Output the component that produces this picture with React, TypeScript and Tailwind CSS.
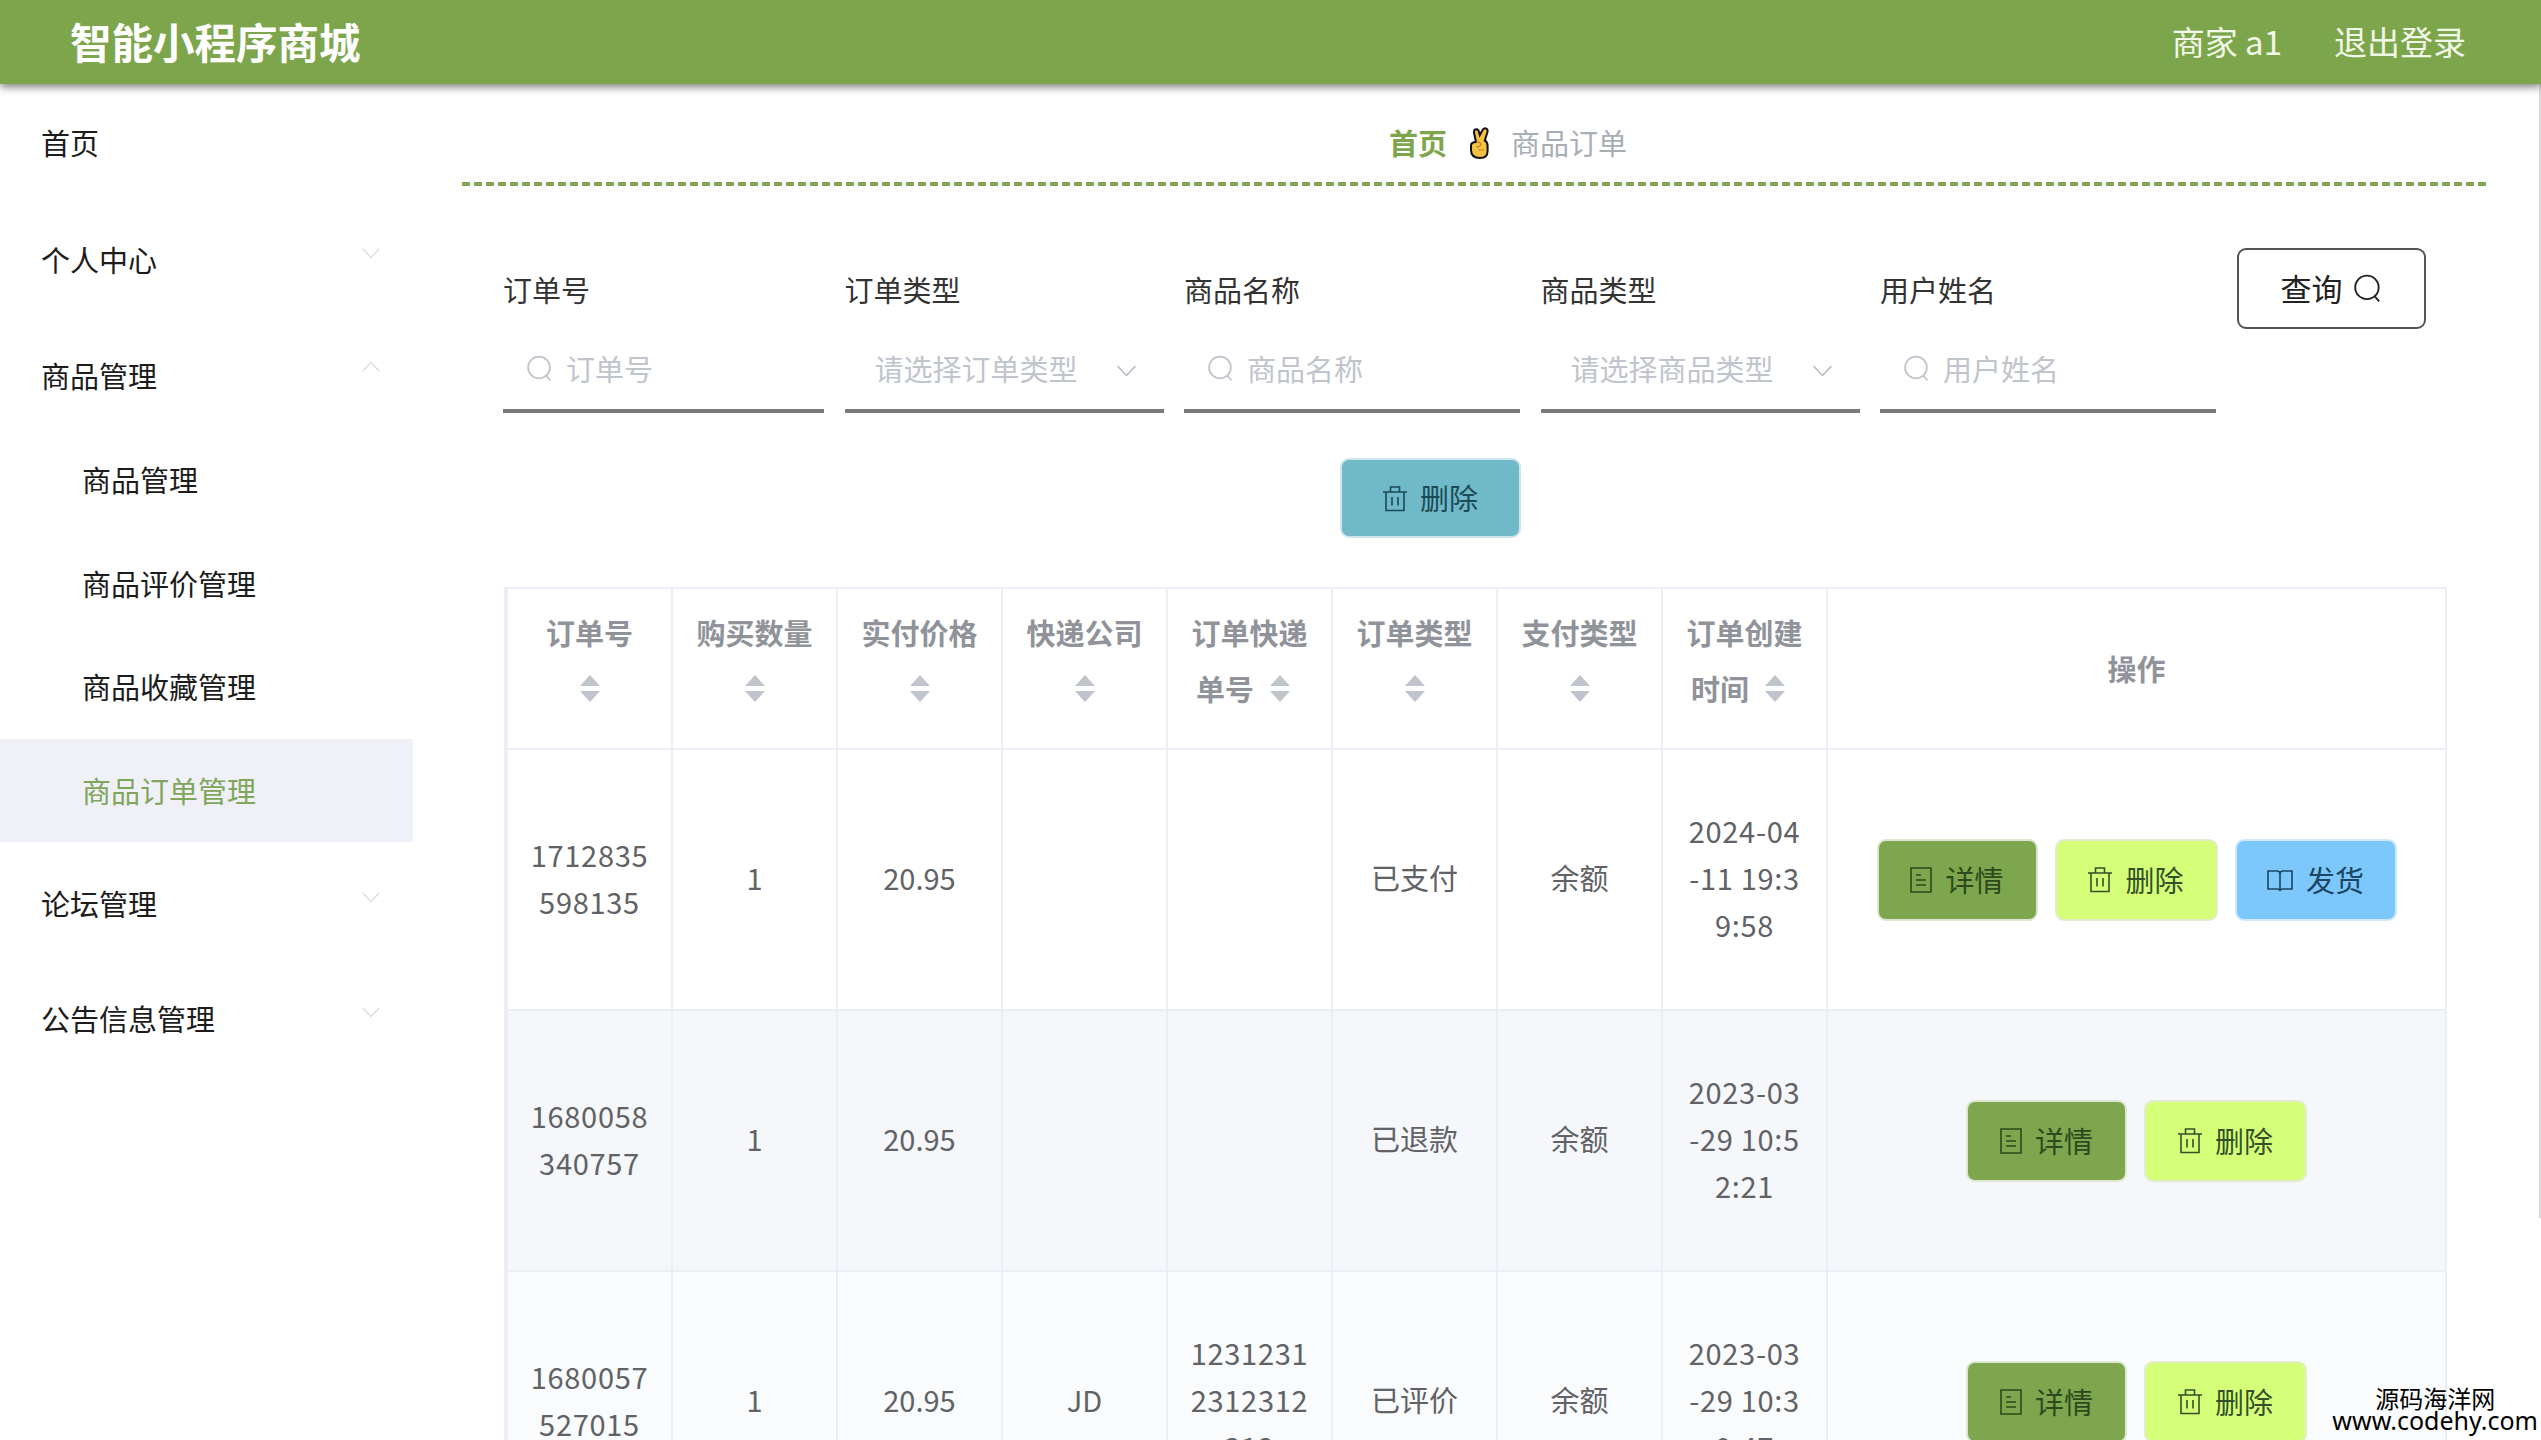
import type { ReactNode } from "react";

type Action = "detail" | "remove" | "ship";

type Order = {
  id: string[];
  company: string;
  tracking: string[];
  orderType: string;
  created: string[];
  actions: Action[];
  rowClass: string;
};

const ORDERS: Order[] = [
  { id: ["1712835", "598135"], company: "", tracking: [], orderType: "已支付", created: ["2024-04", "-11 19:3", "9:58"], actions: ["detail", "remove", "ship"], rowClass: "bg-white" },
  { id: ["1680058", "340757"], company: "", tracking: [], orderType: "已退款", created: ["2023-03", "-29 10:5", "2:21"], actions: ["detail", "remove"], rowClass: "bg-[#f5f7fa]" },
  { id: ["1680057", "527015"], company: "JD", tracking: ["1231231", "2312312", "312"], orderType: "已评价", created: ["2023-03", "-29 10:3", "0:47"], actions: ["detail", "remove"], rowClass: "bg-[#fafbfd]" },
];

const HEADERS: string[][] = [
  ["订单号"],
  ["购买数量"],
  ["实付价格"],
  ["快递公司"],
  ["订单快递", "单号"],
  ["订单类型"],
  ["支付类型"],
  ["订单创建", "时间"],
];

const cellBorder = "border-r-2 border-b-2 border-[#ebeef5]";

function Chevron({ up = false, className }: { up?: boolean; className: string }) {
  return (
    <svg viewBox="0 0 20 12" fill="none" stroke="currentColor" strokeWidth="1.4" className={className}>
      <path d={up ? "M1 11 L10 1.5 L19 11" : "M1 1 L10 10.5 L19 1"} />
    </svg>
  );
}

function SearchIcon({ className }: { className: string }) {
  return (
    <svg viewBox="0 0 26 26" fill="none" stroke="currentColor" strokeWidth="1.7" className={className}>
      <circle cx="12.5" cy="12" r="10.5" />
      <path d="M19.5 20 L23.5 24.5" />
    </svg>
  );
}

function TrashIcon() {
  return (
    <svg viewBox="0 0 24 26" fill="none" stroke="currentColor" strokeWidth="1.6" className="h-[27px] w-[24px]">
      <path d="M0 6.5 H24 M3 6.5 V25 H21 V6.5 M7.5 6.5 V1.5 H16.5 V6.5 M9 11.5 V20 M15 11.5 V20" />
    </svg>
  );
}

function TicketIcon() {
  return (
    <svg viewBox="0 0 22 26" fill="none" stroke="currentColor" strokeWidth="1.6" className="h-[26px] w-[22px]">
      <path d="M1 1 H21 V25 H1 Z M6 8 H11 M6 13 H16 M6 18 H16" />
    </svg>
  );
}

function BookIcon() {
  return (
    <svg viewBox="0 0 26 24" fill="none" stroke="currentColor" strokeWidth="1.6" className="h-6 w-[26px]">
      <path d="M1 3 H10 Q13 3 13 6 Q13 3 16 3 H25 V21 H16 Q13 21 13 23 Q13 21 10 21 H1 Z M13 6 V23" />
    </svg>
  );
}

function Hand() {
  return (
    <svg viewBox="0 0 20 32" className="h-8 w-5">
      <path
        d="M7 15 L5 5.5 Q4.8 2.5 7.3 2.3 Q9.5 2.2 10 5 L10.8 8 L13.8 2.6 Q15.4 0.6 17.4 1.6 Q19.2 2.8 18.4 5.2 L15.8 13.5 Q18.6 15 18.6 19 L18.6 24 Q18.6 31 11 31 Q2 31 2 23 L2 18.5 Q2 15 7 15 Z"
        fill="#f4c143"
        stroke="#111"
        strokeWidth="2"
      />
      <path d="M7 15 Q11 14.5 12 17.5 Q11 20 7 20 M9 23 H15" fill="none" stroke="#b98a20" strokeWidth="1.2" />
    </svg>
  );
}

function SortCaret() {
  return (
    <span className="inline-flex flex-col items-center gap-[5px]">
      <span className="h-0 w-0 border-x-[10px] border-b-[11px] border-x-transparent border-b-[#c0c4cc]" />
      <span className="h-0 w-0 border-x-[10px] border-t-[11px] border-x-transparent border-t-[#c0c4cc]" />
    </span>
  );
}

function Lines({ lines }: { lines: string[] }) {
  return (
    <>
      {lines.map((l) => (
        <div key={l} className="whitespace-nowrap tracking-[0.7px]">{l}</div>
      ))}
    </>
  );
}

function ActionButton({ kind }: { kind: Action }) {
  if (kind === "detail") {
    return (
      <button className="flex h-[82px] w-[161px] items-center justify-center gap-[13px] rounded-[9px] border-2 border-[#dbe7d0] bg-[#7da64f] text-[#2c4a1b]">
        <TicketIcon />
        详情
      </button>
    );
  }
  if (kind === "remove") {
    return (
      <button className="flex h-[82px] w-[163px] items-center justify-center gap-[13px] rounded-[9px] border-2 border-[#e2edd0] bg-[#d5ff78] text-[#33502a]">
        <TrashIcon />
        删除
      </button>
    );
  }
  return (
    <button className="flex h-[82px] w-[162px] items-center justify-center gap-[13px] rounded-[9px] border-2 border-[#cfe9fb] bg-[#7cc8fc] text-[#1b4560]">
      <BookIcon />
      发货
    </button>
  );
}

function MenuItem({ label, chevron, className }: { label: string; chevron?: "up" | "down"; className: string }) {
  return (
    <div className={`relative flex items-center pl-[41px] text-[#1c1c1c] ${className}`}>
      {label}
      {chevron && (
        <Chevron up={chevron === "up"} className="absolute right-[33px] top-[calc(50%-12px)] h-[11px] w-[18px] text-[#dcdcdc]" />
      )}
    </div>
  );
}

function SubItem({ label, active = false }: { label: string; active?: boolean }) {
  return (
    <div className={`flex h-[103.5px] items-center pl-[82px] ${active ? "bg-[#f0f1f8] text-[#80a65c]" : "text-[#1c1c1c]"}`}>
      {label}
    </div>
  );
}

function Sidebar() {
  return (
    <aside className="w-[413px] shrink-0">
      <MenuItem label="首页" className="h-[117px]" />
      <MenuItem label="个人中心" chevron="down" className="h-[117px]" />
      <MenuItem label="商品管理" chevron="up" className="h-[110px] pt-[6px]" />
      <SubItem label="商品管理" />
      <SubItem label="商品评价管理" />
      <SubItem label="商品收藏管理" />
      <SubItem label="商品订单管理" active />
      <MenuItem label="论坛管理" chevron="down" className="mt-1 h-[115px]" />
      <MenuItem label="公告信息管理" chevron="down" className="h-[115px]" />
    </aside>
  );
}

function Field({ label, width, children }: { label: string; width: string; children: ReactNode }) {
  return (
    <div className={width}>
      <div className="flex h-[84px] items-center text-[#333]">{label}</div>
      <div className="flex h-[81px] items-center border-b-4 border-[#7a7a7a] pb-1 text-[#c0c4cc]">{children}</div>
    </div>
  );
}

function SearchInput({ placeholder }: { placeholder: string }) {
  return (
    <div className="flex items-center gap-[13px] pl-[23px]">
      <SearchIcon className="h-[27px] w-[27px] text-[#c0c4cc]" />
      {placeholder}
    </div>
  );
}

function SelectInput({ placeholder }: { placeholder: string }) {
  return (
    <div className="flex w-full items-center justify-between pl-[30px] pr-[27px]">
      {placeholder}
      <Chevron className="mt-1 h-[12px] w-[21px] text-[#b4b8c0]" />
    </div>
  );
}

function Filters() {
  return (
    <div className="mt-[62px] flex items-start gap-[20.5px] pl-[90px]">
      <Field label="订单号" width="w-[321px]"><SearchInput placeholder="订单号" /></Field>
      <Field label="订单类型" width="w-[319px]"><SelectInput placeholder="请选择订单类型" /></Field>
      <Field label="商品名称" width="w-[336px]"><SearchInput placeholder="商品名称" /></Field>
      <Field label="商品类型" width="w-[319px]"><SelectInput placeholder="请选择商品类型" /></Field>
      <Field label="用户姓名" width="w-[336px]"><SearchInput placeholder="用户姓名" /></Field>
      <button className="flex h-[81px] w-[189px] items-center justify-center gap-[10px] rounded-[9px] border-2 border-[#555] text-[31px] text-[#222]">
        查询
        <SearchIcon className="h-[29px] w-[29px] text-[#222]" />
      </button>
    </div>
  );
}

function OrderTable() {
  return (
    <table className="ml-[91px] mt-[49px] w-[1943px] table-fixed border-separate border-spacing-0 border-l-4 border-t-2 border-[#ebeef5]">
      <colgroup>
        <col className="w-[165px]" />
        {HEADERS.slice(1).map((h) => (
          <col key={h[0]} className="w-[165px]" />
        ))}
        <col />
      </colgroup>
      <thead>
        <tr className="h-[161px] bg-white">
          {HEADERS.map((h) => (
            <th key={h[0]} className={`${cellBorder} align-middle font-bold text-[#909399]`}>
              <div className="mb-4 flex flex-col items-center">
                <div className="flex h-14 items-center whitespace-nowrap">{h[0]}</div>
                <div className={`flex h-14 items-center gap-4 whitespace-nowrap ${h[1] ? "mr-[13px]" : ""}`}>
                  {h[1]}
                  <SortCaret />
                </div>
              </div>
            </th>
          ))}
          <th className={`${cellBorder} align-middle font-bold text-[#909399]`}>操作</th>
        </tr>
      </thead>
      <tbody>
        {ORDERS.map((o) => (
          <tr key={o.id[0]} className={`h-[261px] text-center leading-[47px] text-[#606266] ${o.rowClass}`}>
            <td className={`${cellBorder} pb-1`}><Lines lines={o.id} /></td>
            <td className={`${cellBorder} pb-1`}>1</td>
            <td className={`${cellBorder} pb-1`}>20.95</td>
            <td className={`${cellBorder} pb-1`}>{o.company}</td>
            <td className={`${cellBorder} pb-1`}><Lines lines={o.tracking} /></td>
            <td className={`${cellBorder} pb-1`}>{o.orderType}</td>
            <td className={`${cellBorder} pb-1`}>余额</td>
            <td className={`${cellBorder} pb-1`}><Lines lines={o.created} /></td>
            <td className={cellBorder}>
              <div className="flex items-center justify-center gap-[17px]">
                {o.actions.map((a) => (
                  <ActionButton key={a} kind={a} />
                ))}
              </div>
            </td>
          </tr>
        ))}
      </tbody>
    </table>
  );
}

export default function App() {
  return (
    <div className="relative h-[1440px] overflow-hidden bg-white text-[29px] font-['Noto_Sans_CJK_SC','Noto_Sans',sans-serif]">
      <header className="relative z-10 flex h-[84px] items-center justify-between bg-[#7da64c] pl-[70px] pr-[75px] shadow-[0_3px_8px_rgba(0,0,0,0.5)]">
        <div className="text-[41.5px] font-bold leading-none text-white">智能小程序商城</div>
        <div className="flex items-center gap-[52px] text-[33px] text-[#f2f8e8]">
          <span>商家 a1</span>
          <span>退出登录</span>
        </div>
      </header>

      <div className="flex">
        <Sidebar />
        <main className="min-w-0 flex-1">
          <div className="ml-[49px] w-[2028px]">
            <div className="flex h-[98px] items-center gap-[22px] pl-[927px] pt-5 text-[#a8adb6]">
              <span className="font-bold text-[#7da64c]">首页</span>
              <Hand />
              <span>商品订单</span>
            </div>
            <div className="h-1 bg-[repeating-linear-gradient(90deg,#80a654_0_8px,transparent_8px_12px)]" />
          </div>
          <Filters />
          <button className="ml-[927px] mt-[45px] flex h-[80px] w-[181px] items-center justify-center gap-[13px] rounded-[9px] border-2 border-[#cfe6ec] bg-[#6fb9c9] text-[#1d4a56]">
            <TrashIcon />
            删除
          </button>
          <OrderTable />
        </main>
      </div>

      <div className="absolute right-0 top-[84px] h-[1134px] w-[2px] bg-[#d8d8d8]" />
      <div className="absolute bottom-[10px] right-[3px] flex flex-col items-center text-black">
        <div className="text-[24px] leading-[24px]">源码海洋网</div>
        <div className="text-[25px] leading-[20px] font-['Noto_Sans',sans-serif]">www.codehy.com</div>
      </div>
    </div>
  );
}
